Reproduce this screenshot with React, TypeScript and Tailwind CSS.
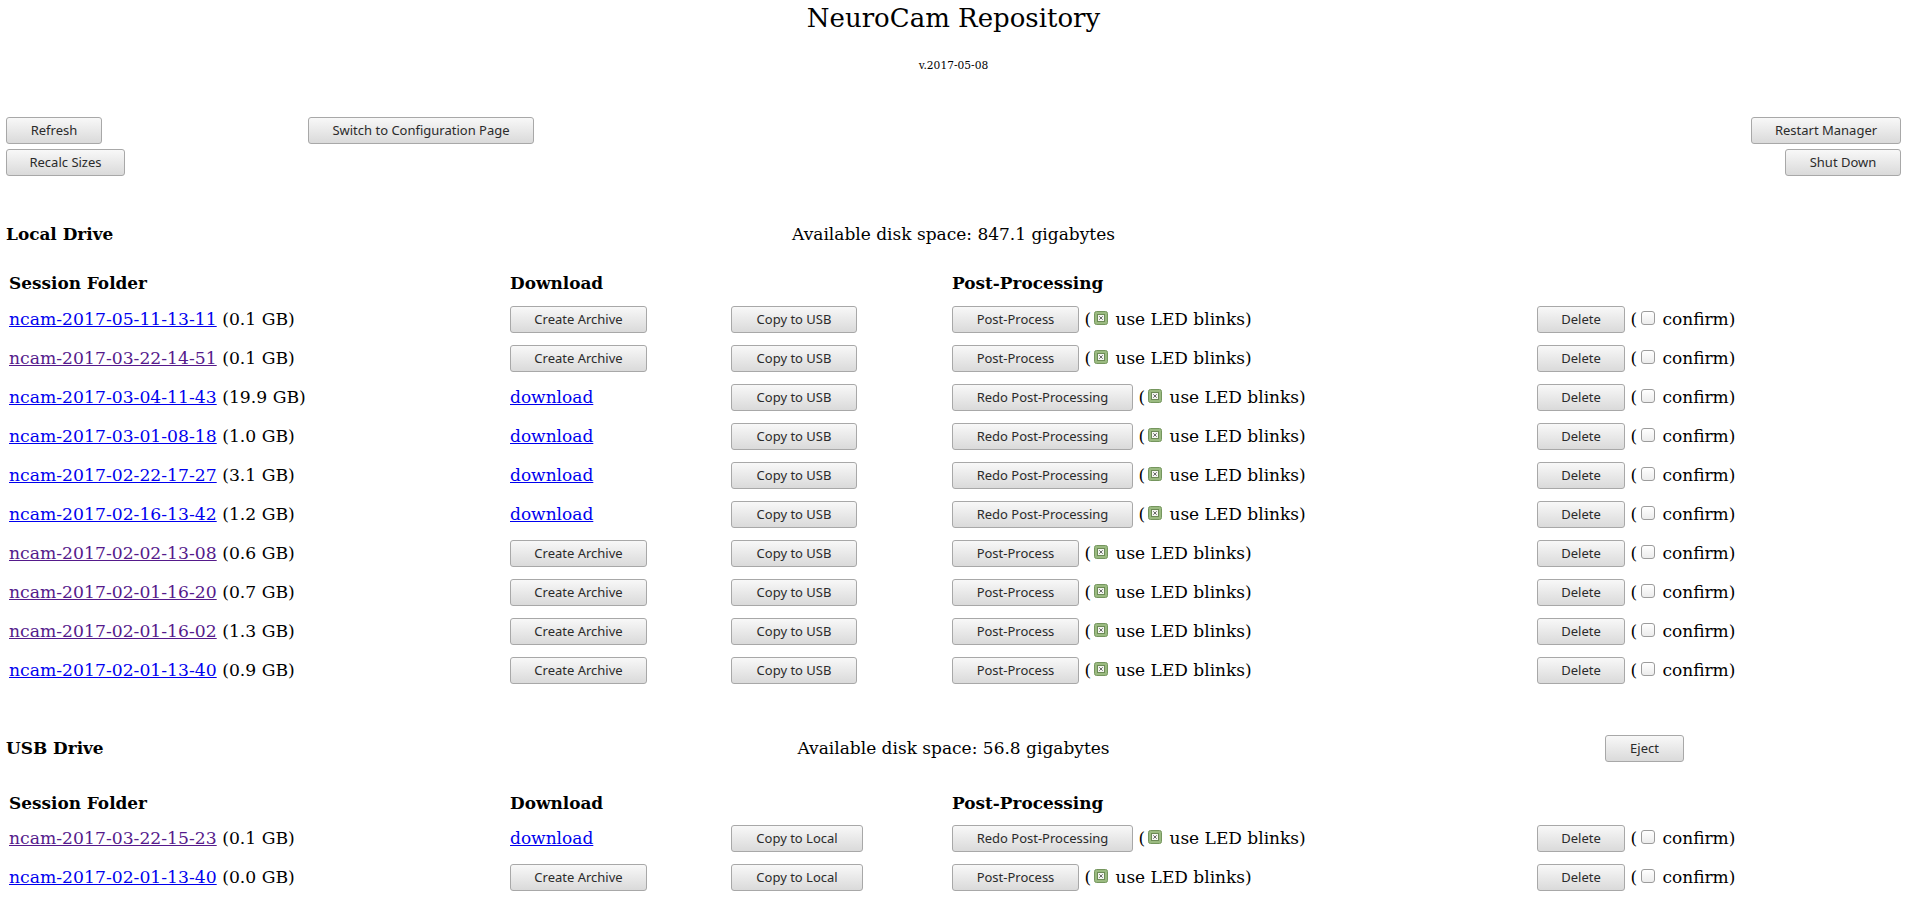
const serif = "font-['DejaVu_Serif',serif]";

const btnBase =
  "inline-flex shrink-0 items-center justify-center h-[27px] rounded-[3px] border border-[#a8a8a8] bg-linear-to-b from-[#f8f8f8] to-[#dadada] font-['Noto_Sans',sans-serif] text-[13px] leading-none text-[#2b2b2b]";

type BtnProps = { label: string; w: string };

function Btn({ label, w }: BtnProps) {
  return (
    <button type="button" className={`${btnBase} ${w}`}>
      {label}
    </button>
  );
}

function CheckedBox() {
  return (
    <svg className="ml-[3px] mr-[2px] mb-[4px] h-[14px] w-[14px] shrink-0" viewBox="0 0 14 14">
      <rect x="0.5" y="0.5" width="13" height="13" rx="2" fill="#9aba80" stroke="#75965e" />
      <rect x="3.5" y="3.5" width="7" height="7" fill="#f4f6f1" stroke="#6c8a56" />
      <path d="M5.3 5.3l3.4 3.4M8.7 5.3l-3.4 3.4" stroke="#6a6a6a" strokeWidth="1" />
    </svg>
  );
}

function EmptyBox() {
  return (
    <span className="ml-[4px] mr-[2px] mb-[4px] inline-block h-[14px] w-[14px] shrink-0 rounded-[3px] border border-[#9c9c9c] bg-linear-to-b from-white to-[#ececec]" />
  );
}

type Row = {
  name: string;
  size: string;
  visited: boolean;
  archived: boolean;
  processed: boolean;
};

const localRows: Row[] = [
  { name: "ncam-2017-05-11-13-11", size: "0.1 GB", visited: false, archived: false, processed: false },
  { name: "ncam-2017-03-22-14-51", size: "0.1 GB", visited: true, archived: false, processed: false },
  { name: "ncam-2017-03-04-11-43", size: "19.9 GB", visited: false, archived: true, processed: true },
  { name: "ncam-2017-03-01-08-18", size: "1.0 GB", visited: false, archived: true, processed: true },
  { name: "ncam-2017-02-22-17-27", size: "3.1 GB", visited: false, archived: true, processed: true },
  { name: "ncam-2017-02-16-13-42", size: "1.2 GB", visited: false, archived: true, processed: true },
  { name: "ncam-2017-02-02-13-08", size: "0.6 GB", visited: true, archived: false, processed: false },
  { name: "ncam-2017-02-01-16-20", size: "0.7 GB", visited: true, archived: false, processed: false },
  { name: "ncam-2017-02-01-16-02", size: "1.3 GB", visited: true, archived: false, processed: false },
  { name: "ncam-2017-02-01-13-40", size: "0.9 GB", visited: false, archived: false, processed: false },
];

const usbRows: Row[] = [
  { name: "ncam-2017-03-22-15-23", size: "0.1 GB", visited: true, archived: true, processed: true },
  { name: "ncam-2017-02-01-13-40", size: "0.0 GB", visited: false, archived: false, processed: false },
];

const gridCols = "grid grid-cols-[501px_221px_221px_585px_1fr] items-center pl-[9px]";

function SessionRow({ row, usb }: { row: Row; usb: boolean }) {
  return (
    <div className={`${gridCols} h-[39px]`}>
      <div className="whitespace-pre text-[17.22px]">
        <a href="#" className={`underline ${row.visited ? "text-[#551a8b]" : "text-[#0000ee]"}`}>
          {row.name}
        </a>
        {` (${row.size})`}
      </div>
      <div>
        {row.archived ? (
          <a href="#" className="text-[#0000ee] underline">
            download
          </a>
        ) : (
          <Btn label="Create Archive" w="w-[137px]" />
        )}
      </div>
      <div>
        {usb ? <Btn label="Copy to Local" w="w-[132px]" /> : <Btn label="Copy to USB" w="w-[126px]" />}
      </div>
      <div className="flex items-center">
        {row.processed ? (
          <Btn label="Redo Post-Processing" w="w-[181px]" />
        ) : (
          <Btn label="Post-Process" w="w-[127px]" />
        )}
        <span className="whitespace-pre"> (</span>
        <CheckedBox />
        <span className="whitespace-pre"> use LED blinks)</span>
      </div>
      <div className="flex items-center">
        <Btn label="Delete" w="w-[88px]" />
        <span className="whitespace-pre"> (</span>
        <EmptyBox />
        <span className="whitespace-pre"> confirm)</span>
      </div>
    </div>
  );
}

function HeaderRow({ h }: { h: string }) {
  return (
    <div className={`${gridCols} ${h} text-[16.9px] font-bold`}>
      <div>Session Folder</div>
      <div>Download</div>
      <div />
      <div>Post-Processing</div>
      <div />
    </div>
  );
}

function DriveHeading({ title, space, eject }: { title: string; space: string; eject?: boolean }) {
  return (
    <div className="grid h-[27px] grid-cols-[1fr_auto_1fr] items-center px-[6px]">
      <div className="text-[16.9px] font-bold">{title}</div>
      <div>Available disk space: {space} gigabytes</div>
      <div className="flex justify-end pr-[217px]">{eject && <Btn label="Eject" w="w-[79px]" />}</div>
    </div>
  );
}

export default function App() {
  return (
    <div className={`min-h-screen bg-white text-[17px] text-black ${serif}`}>
      <h1 className="pt-[3px] text-center text-[26px] font-normal leading-[31px]">NeuroCam Repository</h1>
      <div className="mt-[26px] text-center text-[10.67px] leading-[12px]">v.2017-05-08</div>

      {/* top controls */}
      <div className="mt-[45px] flex items-start px-[6px]">
        <div className="flex flex-col items-start gap-[5px]">
          <Btn label="Refresh" w="w-[96px]" />
          <Btn label="Recalc Sizes" w="w-[119px]" />
        </div>
        <div className="ml-[183px]">
          <Btn label="Switch to Configuration Page" w="w-[226px]" />
        </div>
        <div className="ml-auto flex flex-col items-end gap-[5px]">
          <Btn label="Restart Manager" w="w-[150px]" />
          <Btn label="Shut Down" w="w-[116px]" />
        </div>
      </div>

      {/* local drive */}
      <div className="mt-[45px]">
        <DriveHeading title="Local Drive" space="847.1" />
      </div>
      <div className="mt-[20px]">
        <HeaderRow h="h-[32px]" />
        {localRows.map((r) => (
          <SessionRow key={r.name} row={r} usb={false} />
        ))}
      </div>

      {/* usb drive */}
      <div className="mt-[45px]">
        <DriveHeading title="USB Drive" space="56.8" eject />
      </div>
      <div className="mt-[27px]">
        <HeaderRow h="h-[30px]" />
        {usbRows.map((r) => (
          <SessionRow key={r.name} row={r} usb />
        ))}
      </div>
    </div>
  );
}
